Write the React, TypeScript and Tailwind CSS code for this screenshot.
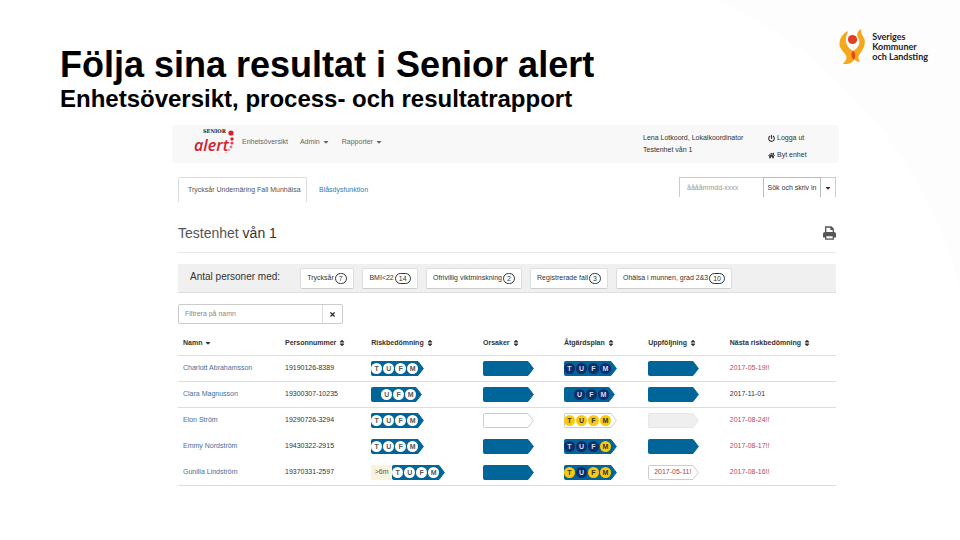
import React from 'react';
import { FaCaretDown, FaHome, FaPowerOff, FaSort, FaTimes } from 'react-icons/fa';

type Dot = { letter: string; tone: 'white' | 'navy' | 'yellow' };
type Fill = 'blue' | 'white' | 'gray';

const dots = (letters: string, tones: string): Dot[] =>
  letters.split('').map((letter, i) => ({
    letter,
    tone: tones[i] === 'w' ? 'white' : tones[i] === 'n' ? 'navy' : 'yellow',
  }));

const dotStyles = {
  white: 'bg-white text-[#555555]',
  navy: 'bg-[#0a2f6c] text-[#d5deea]',
  yellow: 'bg-[#fcc80f] text-[#333333]',
};

const fills = {
  blue: { fill: '#006699', stroke: '#006699' },
  white: { fill: '#ffffff', stroke: '#cccccc' },
  gray: { fill: '#efefef', stroke: '#e6e6e6' },
};

function Arrow({ width, fill, children }: { width: number; fill: Fill; children?: React.ReactNode }) {
  const w = width;
  return (
    <span className="relative inline-flex h-[15px] items-center" style={{ width: w }}>
      <svg className="absolute inset-0" width={w} height="15" viewBox={`0 0 ${w} 15`} aria-hidden="true">
        <path
          d={`M1.5 .5H${w - 6}L${w - 0.6} 7.5L${w - 6} 14.5H1.5Q.5 14.5 .5 13.5V1.5Q.5 .5 1.5 .5Z`}
          {...fills[fill]}
        />
      </svg>
      <span className="relative flex w-full items-center">{children}</span>
    </span>
  );
}

function Dots({ items }: { items: Dot[] }) {
  return (
    <span className="flex w-full justify-end gap-px pr-[6px]">
      {items.map((d) => (
        <span
          key={d.letter}
          className={`flex h-[11px] w-[11px] items-center justify-center rounded-full text-[7px] leading-[11px] font-bold ${dotStyles[d.tone]}`}
        >
          {d.letter}
        </span>
      ))}
    </span>
  );
}

const rows: {
  name: string;
  id: string;
  old?: boolean;
  risk: Dot[];
  cause: Fill;
  plan: Dot[];
  planFill: Fill;
  follow: Fill;
  followText?: string;
  next: string;
  late: boolean;
  line: boolean;
}[] = [
  { name: 'Charlott Abrahamsson', id: '19190126-8389', risk: dots('TUFM', 'wwww'), cause: 'blue', plan: dots('TUFM', 'nnnn'), planFill: 'blue', follow: 'blue', next: '2017-05-19!!', late: true, line: true },
  { name: 'Clara Magnusson', id: '19300307-10235', risk: dots('UFM', 'www'), cause: 'blue', plan: dots('UFM', 'nnn'), planFill: 'blue', follow: 'blue', next: '2017-11-01', late: false, line: true },
  { name: 'Elon Ström', id: '19290726-3294', risk: dots('TUFM', 'wwww'), cause: 'white', plan: dots('TUFM', 'yyyy'), planFill: 'white', follow: 'gray', next: '2017-08-24!!', late: true, line: false },
  { name: 'Emmy Nordström', id: '19430322-2915', risk: dots('TUFM', 'wwww'), cause: 'blue', plan: dots('TUFM', 'nnny'), planFill: 'blue', follow: 'blue', next: '2017-08-17!!', late: true, line: false },
  { name: 'Gunilla Lindström', id: '19370331-2597', old: true, risk: dots('TUFM', 'wwww'), cause: 'blue', plan: dots('TUFM', 'ynyy'), planFill: 'blue', follow: 'white', followText: '2017-05-11!', next: '2017-08-16!!', late: true, line: true },
];

const columns = [
  { title: 'Namn', width: 'w-[15.5%]' },
  { title: 'Personnummer', width: 'w-[13.1%]' },
  { title: 'Riskbedömning', width: 'w-[17%]' },
  { title: 'Orsaker', width: 'w-[12.3%]' },
  { title: 'Åtgärdsplan', width: 'w-[12.8%]' },
  { title: 'Uppföljning', width: 'w-[12.4%]' },
  { title: 'Nästa riskbedömning', width: 'w-[16.9%]' },
];

const counters = [
  { label: 'Trycksår', count: 7, width: 'w-[54px]' },
  { label: 'BMI<22', count: 14, width: 'w-[56px]' },
  { label: 'Ofrivillig viktminskning', count: 2, width: 'w-[96px]' },
  { label: 'Registrerade fall', count: 3, width: 'w-[78px]' },
  { label: 'Ohälsa i munnen, grad 2&3', count: 10, width: 'w-[116px]' },
];

function SklLogo() {
  return (
    <div className="flex items-center gap-[7px]">
      <svg width="26" height="36" viewBox="0 0 26 36" aria-hidden="true">
        <path
          d="M9 2C3 5-.5 11 .8 17C2 22 8 25 7.5 29C7 32 5 33.5 3.5 34.5C8 36 14 34.5 15 30C17 32.5 19 33 21 32.5C18 29 20 26 22 23C25 19 26.5 15 25.5 10C24.5 7 21 5 22.5 0C18 2 17 6 19.5 9.5C22 14 19 19 14 22C9 19 6 14 7 9C7 6 9 4 9 2Z"
          fill="#f6a81c"
        />
        <circle cx="13.5" cy="10.5" r="4.6" fill="#e43d20" />
        <path d="M14 21.5C11.5 25 12 28 14.8 31C17 28 16.5 24 14 21.5Z" fill="#e4481c" />
      </svg>
      <p className="font-[Lato,sans-serif] text-[9px] leading-[10px] font-bold text-[#222222]">
        Sveriges
        <br />
        Kommuner
        <br />
        och Landsting
      </p>
    </div>
  );
}

function AlertLogo() {
  return (
    <div className="relative h-[30px] w-[41px]">
      <span className="absolute top-0 left-[9px] font-['DejaVu_Serif',serif] text-[5px] leading-[6px] font-bold text-[#222222]">
        SENIOR
      </span>
      <span className="absolute top-[7px] left-0 font-['Open_Sans',sans-serif] text-[16px] leading-[20px] font-semibold text-[#cf202f] italic">
        alert
      </span>
      <svg className="absolute inset-0" width="41" height="30" viewBox="0 0 41 30" aria-hidden="true">
        <circle cx="37" cy="5" r="2.6" fill="#d8202f" />
        <circle cx="38" cy="11" r="1.7" fill="#d8202f" />
        <circle cx="38" cy="15" r="1.6" fill="#de4450" />
        <circle cx="37" cy="19" r="1.4" fill="#e5737b" />
        <circle cx="35" cy="22" r="1.2" fill="#eda2a6" />
        <circle cx="32" cy="24.5" r="1" fill="#f3c4c7" />
      </svg>
    </div>
  );
}

function PrintIcon() {
  return (
    <svg width="13" height="14" viewBox="0 0 13 14" fill="none" aria-hidden="true">
      <path d="M2.7 6.5V1H8.2L10.3 3V6.5M8 1V3.4H10.3" stroke="#555555" strokeWidth="1.3" />
      <path d="M2 6H11Q13 6 13 8V11.5H0V8Q0 6 2 6Z" fill="#555555" />
      <rect x="2.7" y="9.6" width="7.6" height="3.5" fill="#ffffff" stroke="#555555" strokeWidth="1.3" />
    </svg>
  );
}

export default function App() {
  return (
    <div className="relative min-h-screen bg-white font-['Liberation_Sans',Arial,sans-serif] text-[7px] leading-[10px] text-[#333333]">
      <svg className="absolute top-0 right-0" width="240" height="540" viewBox="0 0 240 540" aria-hidden="true">
        <path d="M0 0Q190 100 240 290V0Z" fill="#fdfdfd" />
      </svg>

      <header className="relative flex h-[125px] items-start justify-between pr-8 pl-[60px]">
        <div className="pt-[45px] font-bold text-black">
          <h1 className="text-[36px] leading-[40px]">Följa sina resultat i Senior alert</h1>
          <h2 className="text-[24px] leading-[28px]">Enhetsöversikt, process- och resultatrapport</h2>
        </div>
        <div className="pt-[29px]">
          <SklLogo />
        </div>
      </header>

      <main className="relative pr-[121px] pl-[172px]">
        <nav className="flex h-[38px] bg-[#f8f8f8] text-[#666666]">
          <div className="pt-[3px] pl-[22px]">
            <AlertLogo />
          </div>
          <div className="flex h-[34px] flex-1 items-center gap-[12px] pl-[7px]">
            <a href="#oversikt">Enhetsöversikt</a>
            <button type="button" className="flex items-center gap-[2px]">
              Admin <FaCaretDown size={8} />
            </button>
            <button type="button" className="flex items-center gap-[2px]">
              Rapporter <FaCaretDown size={8} />
            </button>
          </div>
          <p className="w-[125px] pt-[7px] leading-[12px] text-[#333333]">
            Lena Lotkoord, Lokalkoordinator
            <br />
            Testenhet vån 1
          </p>
          <div className="flex w-[71px] flex-col items-start gap-[7px] pt-[8px] text-[#333333]">
            <button type="button" className="flex items-center gap-[2px]">
              <FaPowerOff size={7} /> Logga ut
            </button>
            <button type="button" className="flex items-center gap-[2px]">
              <FaHome size={7} /> Byt enhet
            </button>
          </div>
        </nav>

        <div className="pr-[3px] pl-[6px]">
          <div className="flex items-start justify-between pt-[14px]">
            <div className="flex">
              <a href="#trycksar" className="flex h-[25px] w-[129px] items-center rounded-t-[2px] border border-b-0 border-[#d5dde0] pl-[9px] text-[#555555]">
                Trycksår Undernäring Fall Munhälsa
              </a>
              <a href="#blasdysfunktion" className="flex h-[25px] items-center pl-[12px] text-[#337ab7]">
                Blåsdysfunktion
              </a>
            </div>
            <form className="flex h-[20px]">
              <input
                aria-label="Personnummer"
                placeholder="ååååmmdd-xxxx"
                className="w-[84px] border border-r-0 border-b-0 border-[#cccccc] bg-white px-[7px] placeholder:text-[#999999]"
              />
              <button type="button" className="w-[58px] border border-b-0 border-[#bbbbbb] bg-white">
                Sök och skriv in
              </button>
              <button type="button" aria-label="Fler val" className="flex w-[15px] items-center justify-center border-t border-r border-[#cccccc] bg-white">
                <FaCaretDown size={8} />
              </button>
            </form>
          </div>

          <div className="flex h-[51px] items-end justify-between border-b border-[#e8e8e8] pb-[10px]">
            <h3 className="text-[14px] leading-[18px] text-[#555555]">
              Testenhet <span className="text-[#333333]">vån 1</span>
            </h3>
            <button type="button" aria-label="Skriv ut" className="pb-[2px]">
              <PrintIcon />
            </button>
          </div>

          <section className="mt-[11px] flex h-[29px] items-center border-b border-[#dddddd] bg-[#f0f0f0] pl-[12px]">
            <h4 className="w-[110px] pb-[3px] text-[10px] leading-[14px]">Antal personer med:</h4>
            <div className="flex gap-[8px]">
              {counters.map((c) => (
                <button
                  key={c.label}
                  type="button"
                  className={`flex h-[21px] items-center justify-center gap-px rounded-[2px] border border-[#dddddd] border-b-[#cccccc] bg-white whitespace-nowrap ${c.width}`}
                >
                  {c.label}
                  <span className="flex h-[11px] min-w-[11px] items-center justify-center rounded-full border border-[#333333] px-[3px] leading-[9px]">
                    {c.count}
                  </span>
                </button>
              ))}
            </div>
          </section>

          <div className="mt-[11px] flex h-[20px] w-[165px] rounded-[2px] border border-[#cccccc]">
            <input
              aria-label="Filtrera på namn"
              placeholder="Filtrera på namn"
              className="min-w-0 flex-1 px-[6px] placeholder:text-[#888888]"
            />
            <button type="button" aria-label="Rensa" className="flex w-[20px] items-center justify-center border-l border-[#dddddd]">
              <FaTimes size={7} />
            </button>
          </div>

          <table className="mt-[5px] w-full table-fixed border-collapse text-left">
            <thead>
              <tr className="h-[26px] border-b border-[#dddddd]">
                {columns.map((c, i) => (
                  <th key={c.title} className={`pt-[2px] pl-[5px] font-bold whitespace-nowrap ${c.width}`}>
                    <button type="button" className="flex items-center gap-[2px]">
                      {c.title}
                      {i === 0 ? <FaCaretDown size={8} /> : <FaSort size={8} />}
                    </button>
                  </th>
                ))}
              </tr>
            </thead>
            <tbody>
              {rows.map((r) => (
                <tr key={r.name} className={`h-[26px] border-b ${r.line ? 'border-[#dddddd]' : 'border-transparent'}`}>
                  <td className="pl-[5px] whitespace-nowrap">
                    <a href="#person" className="text-[#41709c]">{r.name}</a>
                  </td>
                  <td className="pl-[5px]">{r.id}</td>
                  <td className="pl-[5px]">
                    <div className="flex">
                      {r.old && (
                        <span className="flex h-[15px] w-[21px] items-center justify-center bg-[#fcf3dc] text-[#555555]">
                          &gt;6m
                        </span>
                      )}
                      <Arrow width={r.risk.length === 3 ? 51 : 53} fill="blue">
                        <Dots items={r.risk} />
                      </Arrow>
                    </div>
                  </td>
                  <td className="pl-[5px]">
                    <div className="flex">
                      <Arrow width={51} fill={r.cause} />
                    </div>
                  </td>
                  <td className="pl-[5px]">
                    <div className="flex">
                      <Arrow width={r.plan.length === 3 ? 51 : 53} fill={r.planFill}>
                        <Dots items={r.plan} />
                      </Arrow>
                    </div>
                  </td>
                  <td className="pl-[5px]">
                    <div className="flex">
                      <Arrow width={51} fill={r.follow}>
                        <span className="pl-[6px] text-[#a94442]">{r.followText}</span>
                      </Arrow>
                    </div>
                  </td>
                  <td className={`pl-[5px] ${r.late ? 'text-[#b8485a]' : ''}`}>{r.next}</td>
                </tr>
              ))}
            </tbody>
          </table>
        </div>
      </main>
    </div>
  );
}
